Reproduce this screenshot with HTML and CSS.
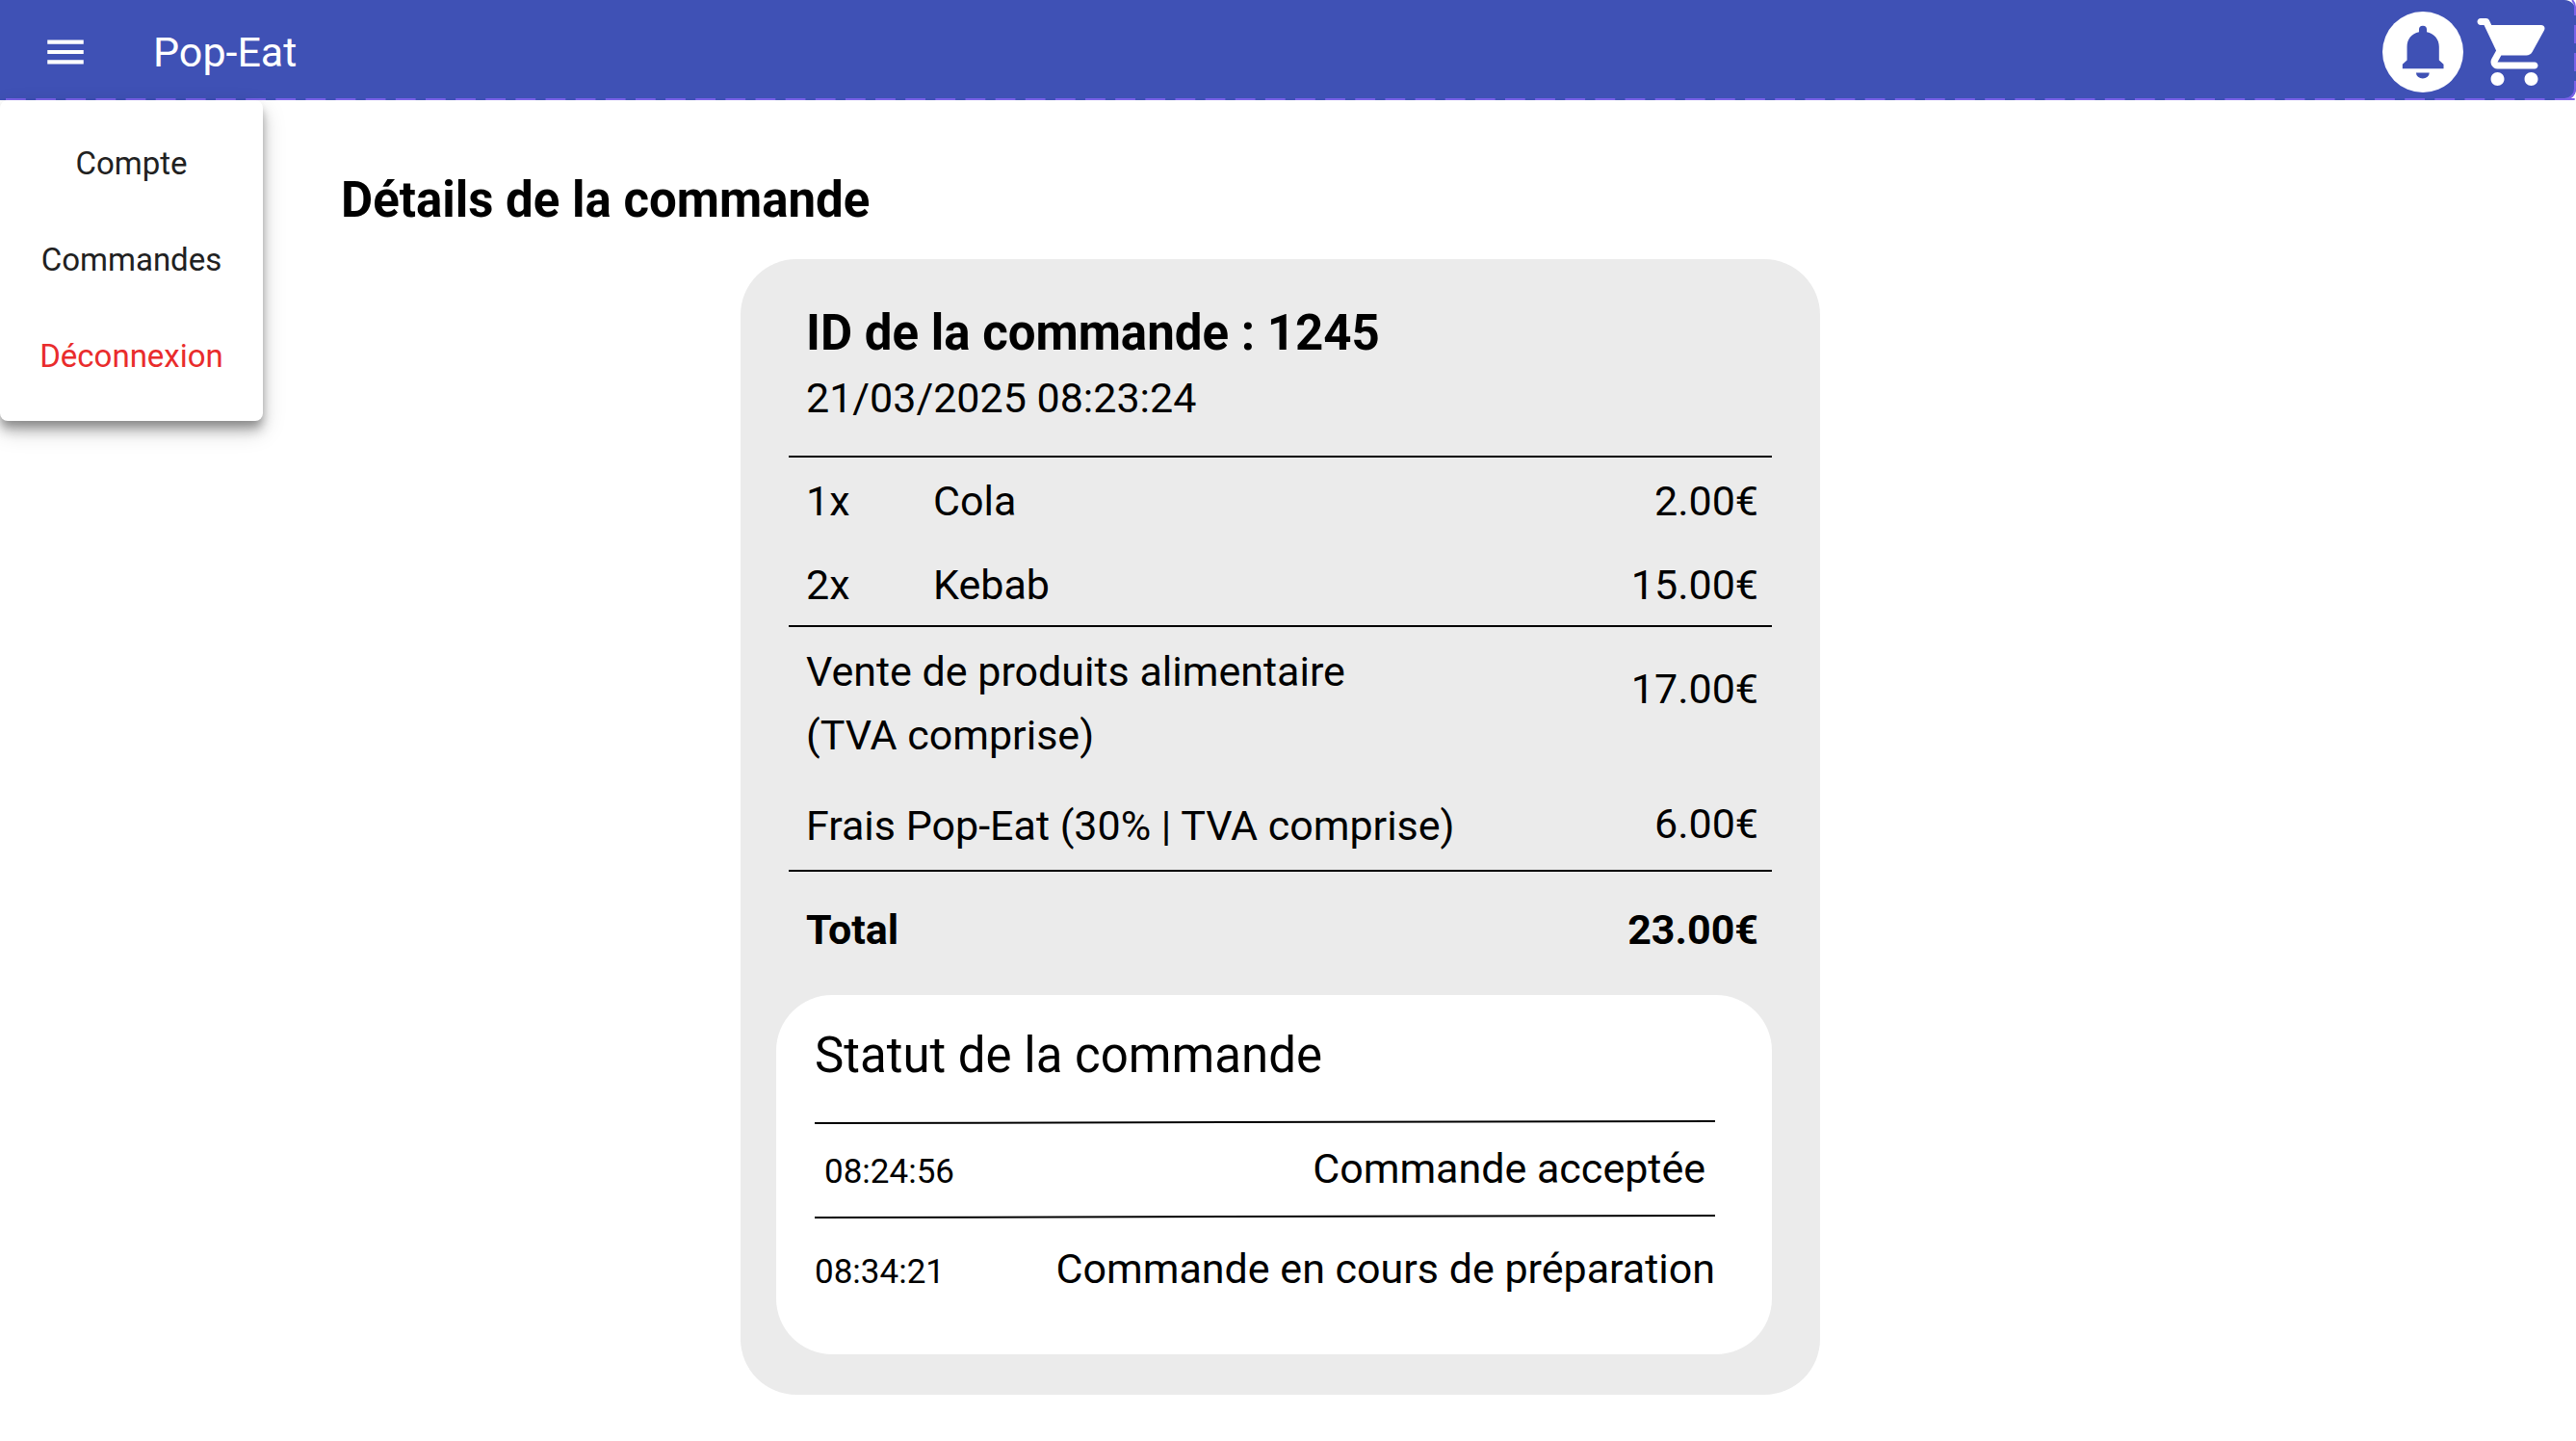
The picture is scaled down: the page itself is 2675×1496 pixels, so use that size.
FILE: index.html
```html
<!DOCTYPE html>
<html lang="fr">
<head>
  <meta charset="utf-8">
  <meta name="viewport" content="width=device-width, initial-scale=1">
  <title>Pop-Eat</title>
  <link rel="stylesheet" href="styles.css">
</head>
<body>
  <header class="topbar">
    <button class="icon-button icon-button--menu" type="button" aria-label="Menu" aria-expanded="true">
      <svg class="icon" viewBox="0 0 24 24"><path d="M3 18h18v-2H3v2zm0-5h18v-2H3v2zm0-7v2h18V6H3z"/></svg>
    </button>
    <span class="brand">Pop-Eat</span>
    <div class="actions">
      <button class="icon-button" type="button" aria-label="Notifications">
        <svg class="icon" viewBox="102 37 250 250">
          <circle cx="227" cy="162" r="125"/>
          <path class="bell" d="M164 213V200L178 187V146C178 122 192 105 215 100V93A12 12 0 0 1 239 93V100C262 105 277 122 277 146V187L291 200V213ZM206 226H247A20.5 18 0 0 1 206 226Z"/>
        </svg>
      </button>
      <button class="icon-button" type="button" aria-label="Panier">
        <svg class="icon" viewBox="0 0 24 24"><path d="M7 18c-1.1 0-1.99.9-1.99 2S5.9 22 7 22s2-.9 2-2-.9-2-2-2zM1 3c0 .55.45 1 1 1h1l3.6 7.59-1.35 2.44C4.52 15.37 5.48 17 7 17h11c.55 0 1-.45 1-1s-.45-1-1-1H7l1.1-2h7.45c.75 0 1.41-.41 1.75-1.03l3.58-6.49c.37-.66-.11-1.48-.87-1.48H5.21l-.67-1.43c-.16-.35-.52-.57-.9-.57H2c-.55 0-1 .45-1 1zm16 15c-1.1 0-1.99.9-1.99 2s.89 2 1.99 2 2-.9 2-2-.9-2-2-2z"/></svg>
      </button>
    </div>
    <svg class="outline" aria-hidden="true">
      <line x1="6" y1="103" x2="100%" y2="103" stroke-dasharray="20.8 10.34"/>
      <svg class="outline-corner" x="100%">
        <path d="M-21 103H-12A11 11 0 0 0 -1 92V84M-1 74V55M-1 45V26M-1 16V8A11 11 0 0 0 -4 0"/>
      </svg>
    </svg>
    <nav class="menu" aria-label="Menu principal">
      <a class="menu-link" href="#compte">Compte</a>
      <a class="menu-link" href="#commandes">Commandes</a>
      <a class="menu-link menu-link--danger" href="#deconnexion">Déconnexion</a>
    </nav>
  </header>

  <main class="page">
    <h1 class="page-title">Détails de la commande</h1>

    <article class="order">
      <header class="order-head">
        <h2 class="order-id">ID de la commande : 1245</h2>
        <time class="order-date" datetime="2025-03-21T08:23:24">21/03/2025 08:23:24</time>
      </header>

      <table class="bill">
        <tbody class="bill-items">
          <tr><td class="qty">1x</td><td>Cola</td><td class="price">2.00€</td></tr>
          <tr><td class="qty">2x</td><td>Kebab</td><td class="price">15.00€</td></tr>
        </tbody>
        <tbody class="bill-fees">
          <tr class="sales"><td colspan="2">Vente de produits alimentaire<br>(TVA comprise)</td><td class="price">17.00€</td></tr>
          <tr class="fees"><td colspan="2">Frais Pop-Eat (30% | TVA comprise)</td><td class="price">6.00€</td></tr>
        </tbody>
        <tbody class="bill-total">
          <tr><th colspan="2" scope="row">Total</th><td class="price">23.00€</td></tr>
        </tbody>
      </table>

      <section class="status">
        <h2 class="status-title">Statut de la commande</h2>
        <svg class="rule" aria-hidden="true"><line x1="0" y1="4" x2="100%" y2="2"/></svg>
        <div class="step step--done">
          <time class="step-time">08:24:56</time>
          <span>Commande acceptée</span>
        </div>
        <svg class="rule" aria-hidden="true"><line x1="0" y1="4" x2="100%" y2="2"/></svg>
        <div class="step step--current">
          <time class="step-time">08:34:21</time>
          <span>Commande en cours de préparation</span>
        </div>
      </section>
    </article>
  </main>
</body>
</html>
```
FILE: styles.css
```css
* {
  box-sizing: border-box;
}

body {
  margin: 0;
  background: #fff;
  color: #000;
  font-family: Roboto, "Liberation Sans", sans-serif;
  font-size: 43px;
  line-height: 66px;
}

/* Top bar */
.topbar {
  position: relative;
  display: flex;
  align-items: center;
  height: 104px;
  padding: 4px 22px 0 43px;
  background: #3f51b5;
  color: #fff;
  border-radius: 0 12px 12px 0;
}

.icon-button {
  display: block;
  width: 84px;
  height: 84px;
  padding: 0;
  border: 0;
  background: none;
  color: inherit;
  cursor: pointer;
}

.icon-button--menu {
  width: 50px;
  height: 50px;
}

.icon {
  display: block;
  width: 100%;
  height: 100%;
  fill: currentColor;
}

.bell {
  fill: #3f51b5;
}

.brand {
  margin-left: 66px;
}

.actions {
  display: flex;
  gap: 11px;
  margin-left: auto;
}

.outline {
  position: absolute;
  inset: 0;
  width: 100%;
  height: 100%;
  overflow: visible;
  pointer-events: none;
  fill: none;
  stroke: #7a62e8;
  stroke-width: 2;
}

.outline-corner {
  overflow: visible;
}

/* Drop-down menu */
.menu {
  position: absolute;
  top: 100%;
  left: 0;
  display: flex;
  flex-direction: column;
  width: 273px;
  padding: 16px 0 17px;
  border-radius: 8px;
  background: #fff;
  box-shadow: 0 6px 8px -2px rgba(0, 0, 0, 0.2),
    0 10px 12px 0 rgba(0, 0, 0, 0.22),
    0 10px 24px 0 rgba(0, 0, 0, 0.18);
}

.menu-link {
  color: #212121;
  font-size: 33px;
  line-height: 100px;
  text-align: center;
  text-decoration: none;
}

.menu-link--danger {
  color: #e92c2c;
}

/* Page */
.page {
  padding: 73px 16px 48px 0;
}

.page-title {
  margin: 0 0 30px 354px;
  font-size: 51px;
  line-height: 62px;
}

.order {
  max-width: 1121px;
  margin: 0 auto;
  padding: 44px 50px 42px 37px;
  border-radius: 58px;
  background: #ebebeb;
}

.order-head {
  margin: 0 0 27px 31px;
}

.order-id {
  margin: 0 0 1px;
  font-size: 51px;
}

.order-date {
  display: block;
}

/* Bill */
.bill {
  width: calc(100% - 13px);
  margin-left: 13px;
  border-collapse: separate;
  border-spacing: 0;
}

.bill td,
.bill th {
  padding: 0 0 0 18px;
  text-align: left;
  vertical-align: top;
}

.bill tbody tr:first-child > * {
  border-top: 2px solid #000;
}

.bill .qty {
  width: 132px;
}

.bill .price {
  padding-left: 0;
  padding-right: 14px;
  text-align: right;
}

.bill .bill-items td {
  padding-top: 3px;
  line-height: 84px;
}

.bill .sales td {
  padding-top: 13px;
}

.bill .sales .price {
  padding-top: 31px;
}

.bill .fees td {
  padding-top: 28px;
  padding-bottom: 13px;
}

.bill .fees .price {
  padding-top: 26px;
}

.bill-total tr > * {
  font-weight: 700;
}

.bill .bill-total tr > * {
  padding-top: 27px;
  padding-bottom: 35px;
}

/* Status */
.status {
  padding: 30px 59px 56px 40px;
  border-radius: 58px;
  background: #fff;
}

.status-title {
  margin: 0 0 33px;
  font-size: 51px;
  font-weight: 400;
}

.rule {
  display: block;
  width: 100%;
  height: 6px;
  stroke: #000;
  stroke-width: 2;
}

.step {
  display: flex;
  align-items: baseline;
  justify-content: space-between;
}

.step--done {
  padding: 12px 10px 14px;
}

.step--current {
  padding-top: 18px;
}

.step-time {
  font-size: 35px;
  line-height: 40px;
}
```
